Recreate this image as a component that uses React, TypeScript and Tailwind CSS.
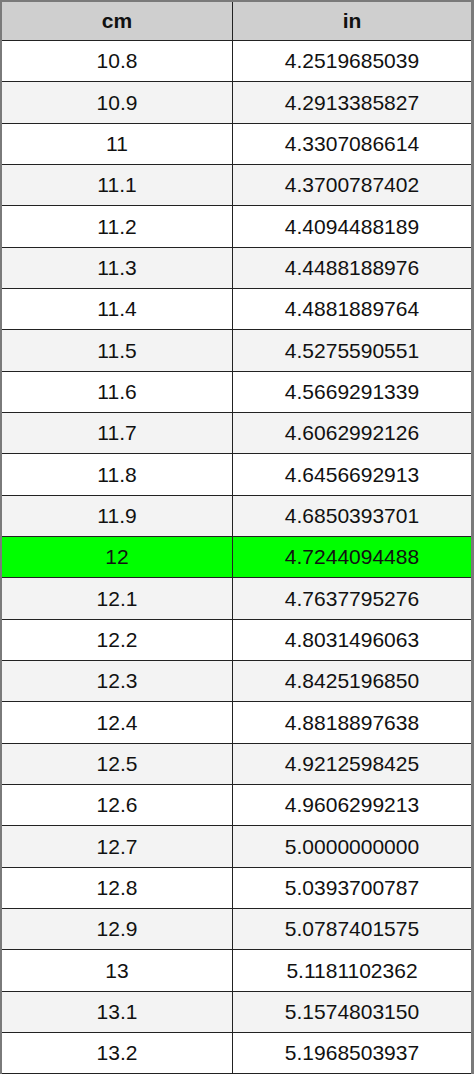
const rows: [string, string][] = [
  ['10.8', '4.2519685039'],
  ['10.9', '4.2913385827'],
  ['11', '4.3307086614'],
  ['11.1', '4.3700787402'],
  ['11.2', '4.4094488189'],
  ['11.3', '4.4488188976'],
  ['11.4', '4.4881889764'],
  ['11.5', '4.5275590551'],
  ['11.6', '4.5669291339'],
  ['11.7', '4.6062992126'],
  ['11.8', '4.6456692913'],
  ['11.9', '4.6850393701'],
  ['12', '4.7244094488'],
  ['12.1', '4.7637795276'],
  ['12.2', '4.8031496063'],
  ['12.3', '4.8425196850'],
  ['12.4', '4.8818897638'],
  ['12.5', '4.9212598425'],
  ['12.6', '4.9606299213'],
  ['12.7', '5.0000000000'],
  ['12.8', '5.0393700787'],
  ['12.9', '5.0787401575'],
  ['13', '5.1181102362'],
  ['13.1', '5.1574803150'],
  ['13.2', '5.1968503937'],
];

export default function App() {
  return (
    <div className="w-[474px] h-[1077px] bg-white font-['Liberation_Sans',Arial,sans-serif] text-[21px] text-[#111]">
      <div className="border-l-2 border-r-[3px] border-t-2 border-[#7a7a7a]">
        {/* header */}
        <div className="flex h-[39px] bg-[#cfcfcf] border-b border-[#222] font-bold">
          <div className="w-[231px] border-r border-[#222] flex items-center justify-center">cm</div>
          <div className="flex-1 flex items-center justify-center">in</div>
        </div>

        {rows.map(([cm, inch], i) => {
          const bg = cm === '12' ? 'bg-[#00ff00]' : i % 2 === 0 ? 'bg-white' : 'bg-[#f3f3f3]';
          return (
            <div key={cm} className={`flex h-[41.33px] border-b border-[#222] ${bg}`}>
              <div className="w-[231px] border-r border-[#222] flex items-center justify-center">{cm}</div>
              <div className="flex-1 flex items-center justify-center">{inch}</div>
            </div>
          );
        })}
      </div>
    </div>
  );
}
